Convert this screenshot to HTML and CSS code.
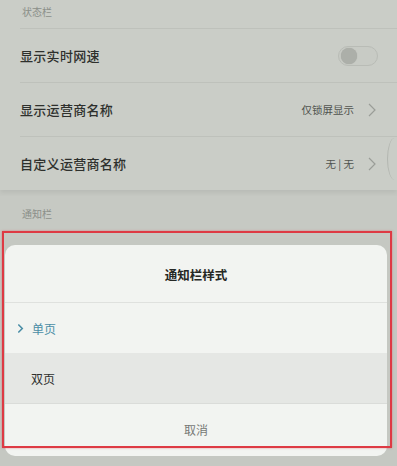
FILE: index.html
```html
<!DOCTYPE html>
<html lang="zh-CN">
<head>
    <meta charset="UTF-8">
    <meta name="viewport" content="width=device-width, initial-scale=1.0">
    <title>通知栏样式</title>
    <link rel="stylesheet" href="styles.css">
</head>
<body>
    <div class="screen">
        <div class="group-title">状态栏</div>
        <div class="list">
            <div class="row">
                <span class="label">显示实时网速</span>
                <span class="switch"><span class="knob"></span></span>
            </div>
            <div class="row">
                <span class="label">显示运营商名称</span>
                <span class="value">仅锁屏显示</span>
                <svg class="chevron" viewBox="0 0 8 14" width="8" height="14"><path d="M1 1l6 6-6 6" fill="none" stroke="#9a9d98" stroke-width="1.2"/></svg>
            </div>
            <div class="row">
                <span class="label">自定义运营商名称</span>
                <span class="value">无 | 无</span>
                <svg class="chevron" viewBox="0 0 8 14" width="8" height="14"><path d="M1 1l6 6-6 6" fill="none" stroke="#9a9d98" stroke-width="1.2"/></svg>
            </div>
        </div>
        <div class="group-title section-two">通知栏</div>

        <div class="sheet">
            <div class="sheet-title">通知栏样式</div>
            <div class="option selected">
                <svg class="tick" viewBox="0 0 8 12" width="7" height="11"><path d="M1.5 1.5l4.5 4.5-4.5 4.5" fill="none" stroke="#4b8ea6" stroke-width="1.8"/></svg>
                <span>单页</span>
            </div>
            <div class="option pressed"><span>双页</span></div>
            <div class="cancel">取消</div>
        </div>

        <div class="edge-glow"></div>
        <div class="highlight"></div>
    </div>
</body>
</html>
```

FILE: styles.css
```css
body {
    margin: 0;
    font-family: "Noto Sans CJK SC", "Noto Sans", sans-serif;
    background-color: #c5c8c2;
}
.screen {
    position: relative;
    width: 397px;
    height: 466px;
    overflow: hidden;
    background-color: #c5c8c2;
}
.group-title {
    height: 28px;
    padding-left: 22px;
    font-size: 10px;
    line-height: 24px;
    color: #8b8f89;
    background-color: #cacdc7;
}
.list {
    background-color: #cacdc7;
    box-shadow: 0 3px 4px rgba(0, 0, 0, 0.06);
}
.row {
    display: flex;
    align-items: center;
    height: 53px;
    margin-left: 20px;
    padding-right: 21px;
    border-top: 1px solid #bec1bb;
}
.label {
    flex: 1;
    font-size: 13px;
    font-weight: 500;
    color: #2e302d;
    letter-spacing: 0.3px;
}
.value {
    font-size: 10.5px;
    color: #51544f;
    margin-right: 14px;
}
.switch {
    width: 40px;
    height: 20px;
    margin-right: -2px;
    border: 1px solid #b9bcb6;
    border-radius: 11px;
    box-sizing: border-box;
    display: flex;
    align-items: center;
    padding-left: 2px;
    background-color: #c8cbc5;
}
.knob {
    width: 16px;
    height: 16px;
    border-radius: 50%;
    background-color: #acafa9;
    box-shadow: 0 0 1px rgba(0, 0, 0, 0.2);
}
.section-two {
    height: 42px;
    margin-top: 6px;
    line-height: 36px;
    background-color: #c6c9c3;
}
.sheet {
    margin: 7px 10px 0 5px;
    background-color: #f2f4f1;
    border-radius: 10px;
    overflow: hidden;
}
.sheet-title {
    height: 57px;
    line-height: 60px;
    text-align: center;
    font-size: 12.5px;
    font-weight: bold;
    color: #262825;
    border-bottom: 1px solid #dfe1de;
}
.option {
    display: flex;
    align-items: center;
    height: 50px;
    padding-left: 26px;
    font-size: 12px;
    color: #2e302d;
}
.option.selected {
    padding-left: 12px;
    color: #4b8ea6;
}
.tick {
    margin-right: 8px;
}
.option.pressed {
    background-color: #e5e7e4;
    border-bottom: 1px solid #dadcd9;
}
.cancel {
    height: 52px;
    line-height: 52px;
    text-align: center;
    font-size: 12px;
    color: #767875;
}
.edge-glow {
    position: absolute;
    left: 387px;
    top: 138px;
    width: 14px;
    height: 42px;
    border-left: 1px solid #b3b6b0;
    border-radius: 50% 0 0 50%;
}
.highlight {
    position: absolute;
    left: 2px;
    top: 231px;
    width: 386px;
    height: 213px;
    border: 2px solid #de3a44;
    box-shadow: 0 0 2px rgba(222, 58, 68, 0.5);
}
```
